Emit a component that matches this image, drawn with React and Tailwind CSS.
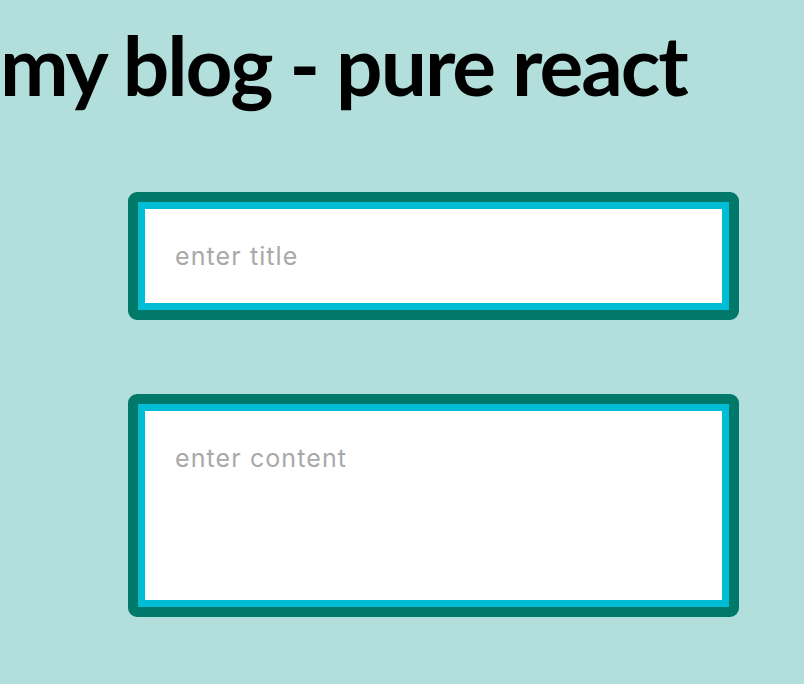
export default function App() {
  return (
    <div className="min-h-screen bg-[#b2dfdb]" style={{ fontFamily: 'Lato, sans-serif' }}>
      <h1 className="pt-[9px] text-[82px] font-bold leading-[110px] text-black tracking-[-2px]">
        my blog - pure react
      </h1>

      <form className="ml-[128px] mt-[73px] w-[611px] flex flex-col gap-[74px]">
        <div className="rounded-[9px] border-[10px] border-[#00796b] bg-[#00796b]">
          <input
            type="text"
            placeholder="enter title"
            className="block w-full h-[108px] border-[7px] border-[#00bcd4] bg-white px-[30px] text-[25px] tracking-[1.1px] text-gray-700 placeholder:text-[#a9a9a9] outline-none"
            style={{ fontFamily: 'Inter, sans-serif' }}
          />
        </div>
        <div className="rounded-[9px] border-[10px] border-[#00796b] bg-[#00796b]">
          <textarea
            placeholder="enter content"
            className="block w-full h-[203px] resize-none border-[7px] border-[#00bcd4] bg-white px-[30px] pt-[29px] text-[25px] tracking-[1.1px] text-gray-700 placeholder:text-[#a9a9a9] outline-none"
            style={{ fontFamily: 'Inter, sans-serif' }}
          />
        </div>
      </form>
    </div>
  );
}
